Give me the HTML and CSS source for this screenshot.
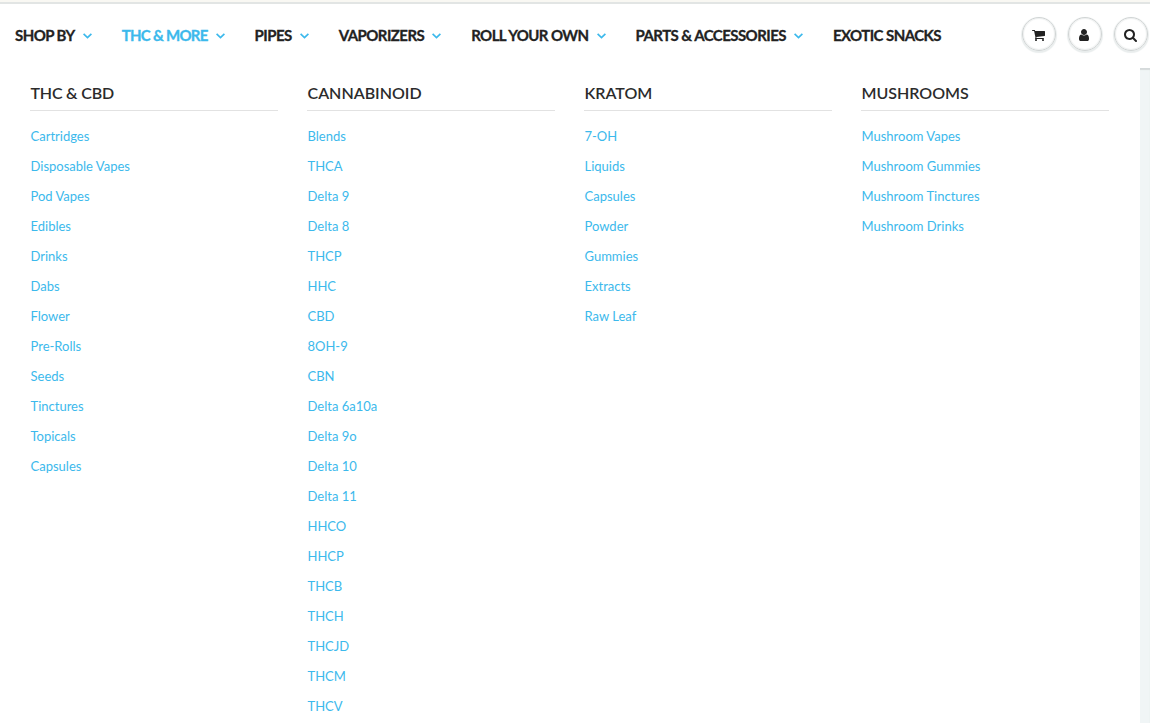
FILE: index.html
```
<!DOCTYPE html>
<html lang="en">
<head>
<meta charset="utf-8">
<title>THC &amp; More</title>
<link rel="stylesheet" href="styles.css">
</head>
<body>
<header class="header">
  <nav class="nav">
    <a class="nav-item"><span>SHOP BY</span><svg class="chevron" viewBox="0 0 9 6"><path d="M.6 .8l3.900 3.700L8.400 .8"/></svg></a>
    <a class="nav-item active"><span>THC &amp; MORE</span><svg class="chevron" viewBox="0 0 9 6"><path d="M.6 .8l3.900 3.700L8.400 .8"/></svg></a>
    <a class="nav-item"><span>PIPES</span><svg class="chevron" viewBox="0 0 9 6"><path d="M.6 .8l3.900 3.700L8.400 .8"/></svg></a>
    <a class="nav-item"><span>VAPORIZERS</span><svg class="chevron" viewBox="0 0 9 6"><path d="M.6 .8l3.900 3.700L8.400 .8"/></svg></a>
    <a class="nav-item"><span>ROLL YOUR OWN</span><svg class="chevron" viewBox="0 0 9 6"><path d="M.6 .8l3.900 3.700L8.400 .8"/></svg></a>
    <a class="nav-item"><span>PARTS &amp; ACCESSORIES</span><svg class="chevron" viewBox="0 0 9 6"><path d="M.6 .8l3.900 3.700L8.400 .8"/></svg></a>
    <a class="nav-item"><span>EXOTIC SNACKS</span></a>
  </nav>
  <div class="actions">
    <a class="round"><svg class="icon" viewBox="0 0 1664 1792"><path d="M640 1536q0 52-38 90t-90 38-90-38-38-90 38-90 90-38 90 38 38 90zm896 0q0 52-38 90t-90 38-90-38-38-90 38-90 90-38 90 38 38 90zm128-1088v512q0 24-16.500 42.500t-40.500 21.500l-1044 122q13 60 13 70 0 16-24 64h920q26 0 45 19t19 45-19 45-45 19h-1024q-26 0-45-19t-19-45q0-11 8-31.500t16-36 21.500-40 15.500-29.500l-177-823h-204q-26 0-45-19t-19-45 19-45 45-19h256q16 0 28.500 6.500t19.500 15.500 13 24.500 8 26 5.500 29.500 4.500 26h1201q26 0 45 19t19 45z"/></svg></a>
    <a class="round"><svg class="icon" viewBox="0 0 1280 1792"><path d="M1280 1399q0 109-62.500 187t-150.500 78h-854q-88 0-150.500-78t-62.500-187q0-85 8.500-160.500t31.500-152 58.500-131 94-89 134.500-34.500q131 128 313 128t313-128q76 0 134.500 34.500t94 89 58.500 131 31.500 152 8.500 160.500zM1024 512q0 159-112.500 271.500t-271.500 112.500-271.500-112.500-112.500-271.500 112.500-271.500 271.500-112.500 271.500 112.500 112.500 271.500z"/></svg></a>
    <a class="round"><svg class="icon" viewBox="0 0 1664 1792"><path d="M1152 832q0-185-131.500-316.500t-316.500-131.500-316.500 131.500-131.500 316.500 131.500 316.500 316.500 131.500 316.500-131.500 131.500-316.500zm512 832q0 52-38 90t-90 38q-54 0-90-38l-343-342q-179 124-399 124-143 0-273.500-55.500t-225-150-150-225-55.500-273.500 55.500-273.500 150-225 225-150 273.500-55.500 273.500 55.500 225 150 150 225 55.500 273.500q0 220-124 399l343 343q37 37 37 90z"/></svg></a>
  </div>
</header>
<main class="page">
  <div class="menu">
    <section class="column"><h2>THC &amp; CBD</h2><ul><li>Cartridges</li><li>Disposable Vapes</li><li>Pod Vapes</li><li>Edibles</li><li>Drinks</li><li>Dabs</li><li>Flower</li><li>Pre-Rolls</li><li>Seeds</li><li>Tinctures</li><li>Topicals</li><li>Capsules</li></ul></section>
    <section class="column"><h2>CANNABINOID</h2><ul><li>Blends</li><li>THCA</li><li>Delta 9</li><li>Delta 8</li><li>THCP</li><li>HHC</li><li>CBD</li><li>8OH-9</li><li>CBN</li><li>Delta 6a10a</li><li>Delta 9o</li><li>Delta 10</li><li>Delta 11</li><li>HHCO</li><li>HHCP</li><li>THCB</li><li>THCH</li><li>THCJD</li><li>THCM</li><li>THCV</li></ul></section>
    <section class="column"><h2>KRATOM</h2><ul><li>7-OH</li><li>Liquids</li><li>Capsules</li><li>Powder</li><li>Gummies</li><li>Extracts</li><li>Raw Leaf</li></ul></section>
    <section class="column"><h2>MUSHROOMS</h2><ul><li>Mushroom Vapes</li><li>Mushroom Gummies</li><li>Mushroom Tinctures</li><li>Mushroom Drinks</li></ul></section>
  </div>
</main>
</body>
</html>
```
FILE: styles.css
```
* { box-sizing: border-box; }
body {
  margin: 0;
  height: 723px;
  overflow: hidden;
  font-family: Lato, "Liberation Sans", sans-serif;
  background: #fff;
}
.header {
  height: 68px;
  display: flex;
  justify-content: space-between;
  padding: 0 2px 0 15px;
  border-top: 2px solid #f9f8f3;
  background: linear-gradient(#e2e5e4 2px, #fff 2px);
}
.nav {
  display: flex;
  gap: 30px;
  height: 66px;
  align-items: center;
  white-space: nowrap;
}
.nav-item {
  display: flex;
  align-items: center;
  gap: 8px;
  font-size: 15px;
  line-height: 20px;
  font-weight: 700;
  letter-spacing: -0.56px;
  color: #222;
  -webkit-text-stroke: 0.3px currentColor;
}
.active { color: #3cb9ec; letter-spacing: -0.73px; }
.chevron {
  width: 9px;
  height: 6px;
  margin-top: 2px;
  fill: none;
  stroke: #3cb9ec;
  stroke-width: 1.7;
}
.actions { display: flex; gap: 12px; padding-top: 15px; }
.round {
  width: 34px;
  height: 34px;
  border-radius: 50%;
  border: 1px solid #d0d4d4;
  box-shadow: 0 1px 1px 1px #e9eded, inset 0 0 1px 1px #eef0f0;
  display: flex;
  align-items: center;
  justify-content: center;
}
.icon { height: 14px; fill: #222; overflow: visible; margin: 2px 2px 0 0; }
.page {
  height: 655px;
  background: #f0f5f6;
  box-shadow: inset 0 2px 1px #d5dadb;
}
.menu {
  width: 1140px;
  height: 655px;
  background: #fff;
  padding: 14px 30px 0;
  display: grid;
  grid-template-columns: repeat(4, 248px);
  column-gap: 29px;
}
.column h2 {
  margin: 0 0 10px;
  height: 29px;
  border-bottom: 1px solid #e2e2e2;
  font-size: 16px;
  line-height: 22px;
  font-weight: 600;
  text-indent: 0.5px;
  color: #2b2b2b;
}
.column:first-child h2 { letter-spacing: -0.2px; }
.column ul { list-style: none; margin: 0; padding: 0 0 0 0.5px; }
.column li { height: 30px; font-size: 13px; line-height: 30px; color: #3cb9ec; }
```
